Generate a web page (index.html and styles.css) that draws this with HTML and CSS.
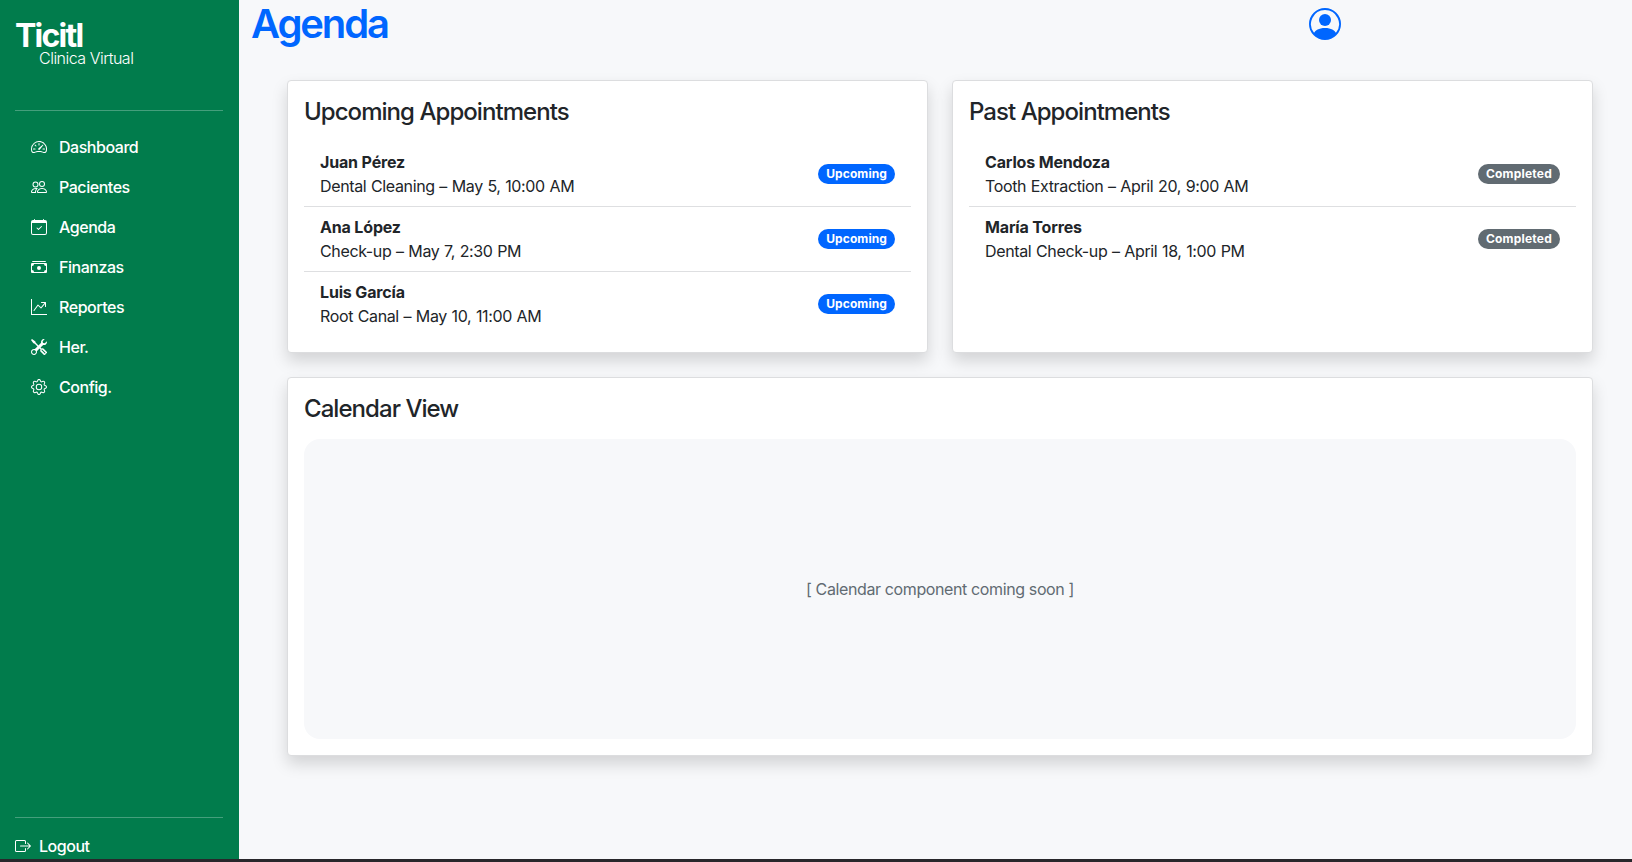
FILE: index.html
```html
<!DOCTYPE html>
<html lang="es">
<head>
<meta charset="utf-8">
<title>Ticitl</title>
<link rel="stylesheet" href="styles.css">
</head>
<body>
<div class="app">
  <aside class="sidebar">
    <div class="brand">
      <div class="brand-name">Ticitl</div>
      <div class="brand-sub">Clinica Virtual</div>
    </div>
    <hr class="rule">
    <nav class="nav">
      <a class="nav-link"><svg class="icon" viewBox="0 0 16 16"><path d="M8 4a.5.5 0 0 1 .5.5V6a.5.5 0 0 1-1 0V4.500A.5.5 0 0 1 8 4M3.732 5.732a.5.5 0 0 1 .707 0l.915.914a.5.5 0 1 1-.708.708l-.914-.915a.5.5 0 0 1 0-.707M2 10a.5.5 0 0 1 .5-.5h1.586a.5.5 0 0 1 0 1H2.500A.5.5 0 0 1 2 10m9.500 0a.5.5 0 0 1 .5-.5h1.500a.5.5 0 0 1 0 1H12a.5.5 0 0 1-.5-.5m.754-4.246a.389.389 0 0 0-.527-.020L7.547 9.310a.910.910 0 1 0 1.302 1.258l3.434-4.297a.389.389 0 0 0-.029-.518z"/><path fill-rule="evenodd" d="M0 10a8 8 0 1 1 15.547 2.661c-.442 1.253-1.845 1.602-2.932 1.250C11.309 13.488 9.475 13 8 13c-1.474 0-3.310.488-4.615.911-1.087.352-2.490.003-2.932-1.250A8 8 0 0 1 0 10m8-7a7 7 0 0 0-6.603 9.329c.203.575.923.876 1.680.630C4.397 12.533 6.358 12 8 12s3.604.532 4.923.960c.757.245 1.477-.056 1.680-.631A7 7 0 0 0 8 3"/></svg><span>Dashboard</span></a>
      <a class="nav-link"><svg class="icon" viewBox="0 0 16 16"><path d="M15 14s1 0 1-1-1-4-5-4-5 3-5 4 1 1 1 1zm-7.978-1L7 12.996c.001-.264.167-1.030.760-1.720C8.312 10.629 9.282 10 11 10c1.717 0 2.687.630 3.240 1.276.593.690.758 1.457.760 1.720l-.008.002-.014.002zM11 7a2 2 0 1 0 0-4 2 2 0 0 0 0 4m3-2a3 3 0 1 1-6 0 3 3 0 0 1 6 0M6.936 9.280a6 6 0 0 0-1.230-.247A7 7 0 0 0 5 9c-4 0-5 3-5 4q0 1 1 1h4.216A2.240 2.240 0 0 1 5 13c0-1.010.377-2.042 1.090-2.904.243-.294.526-.569.846-.816M4.920 10A5.500 5.500 0 0 0 4 13H1c0-.260.164-1.030.760-1.724.545-.636 1.492-1.256 3.160-1.275ZM1.500 5.500a3 3 0 1 1 6 0 3 3 0 0 1-6 0m3-2a2 2 0 1 0 0 4 2 2 0 0 0 0-4"/></svg><span>Pacientes</span></a>
      <a class="nav-link"><svg class="icon" viewBox="0 0 16 16"><path d="M10.854 7.146a.5.5 0 0 1 0 .708l-3 3a.5.5 0 0 1-.708 0l-1.500-1.500a.5.5 0 1 1 .708-.708L7.500 9.793l2.646-2.647a.5.5 0 0 1 .708 0"/><path d="M3.500 0a.5.5 0 0 1 .5.5V1h8V.5a.5.5 0 0 1 1 0V1h1a2 2 0 0 1 2 2v11a2 2 0 0 1-2 2H2a2 2 0 0 1-2-2V3a2 2 0 0 1 2-2h1V.5a.5.5 0 0 1 .5-.5M1 4v10a1 1 0 0 0 1 1h12a1 1 0 0 0 1-1V4z"/></svg><span>Agenda</span></a>
      <a class="nav-link"><svg class="icon" viewBox="0 0 16 16"><path d="M1 3a1 1 0 0 1 1-1h12a1 1 0 0 1 1 1zm7 8a2 2 0 1 0 0-4 2 2 0 0 0 0 4"/><path d="M0 5a1 1 0 0 1 1-1h14a1 1 0 0 1 1 1v8a1 1 0 0 1-1 1H1a1 1 0 0 1-1-1zm3 0a2 2 0 0 1-2 2v4a2 2 0 0 1 2 2h10a2 2 0 0 1 2-2V7a2 2 0 0 1-2-2z"/></svg><span>Finanzas</span></a>
      <a class="nav-link"><svg class="icon" viewBox="0 0 16 16"><path fill-rule="evenodd" d="M0 0h1v15h15v1H0zm10 3.500a.5.5 0 0 1 .5-.5h4a.5.5 0 0 1 .5.5v4a.5.5 0 0 1-1 0V4.900l-3.613 4.417a.5.5 0 0 1-.740.037L7.060 6.767l-3.656 5.027a.5.5 0 0 1-.808-.588l4-5.500a.5.5 0 0 1 .758-.060l2.609 2.610L13.445 4H10.500a.5.5 0 0 1-.5-.5"/></svg><span>Reportes</span></a>
      <a class="nav-link"><svg class="icon" viewBox="0 0 16 16"><path d="M1 0 0 1l2.200 3.081a1 1 0 0 0 .815.419h.070a1 1 0 0 1 .708.293l2.675 2.675-2.617 2.654A3.003 3.003 0 0 0 0 13a3 3 0 1 0 5.878-.851l2.654-2.617.968.968-.305.914a1 1 0 0 0 .242 1.023l3.270 3.270a.997.997 0 0 0 1.414 0l1.586-1.586a.997.997 0 0 0 0-1.414l-3.270-3.270a1 1 0 0 0-1.023-.242L10.500 9.500l-.960-.960 2.680-2.643A3.005 3.005 0 0 0 16 3q0-.405-.102-.777l-2.140 2.141L12 4l-.364-1.757L13.777.102a3 3 0 0 0-3.675 3.680L7.462 6.460 4.793 3.793a1 1 0 0 1-.293-.707v-.071a1 1 0 0 0-.419-.814zm9.646 10.646a.5.5 0 0 1 .708 0l2.914 2.915a.5.5 0 0 1-.707.707l-2.915-2.914a.5.5 0 0 1 0-.708M3 11l.471.242.529.026.287.445.445.287.026.529L5 13l-.242.471-.026.529-.445.287-.287.445-.529.026L3 15l-.471-.242L2 14.732l-.287-.445L1.268 14l-.026-.529L1 13l.242-.471.026-.529.445-.287.287-.445.529-.026z"/></svg><span>Her.</span></a>
      <a class="nav-link"><svg class="icon" viewBox="0 0 16 16"><path d="M8 4.754a3.246 3.246 0 1 0 0 6.492 3.246 3.246 0 0 0 0-6.492M5.754 8a2.246 2.246 0 1 1 4.492 0 2.246 2.246 0 0 1-4.492 0"/><path d="M9.796 1.343c-.527-1.790-3.065-1.790-3.592 0l-.094.319a.873.873 0 0 1-1.255.520l-.292-.160c-1.640-.892-3.433.902-2.540 2.541l.159.292a.873.873 0 0 1-.520 1.255l-.319.094c-1.790.527-1.790 3.065 0 3.592l.319.094a.873.873 0 0 1 .520 1.255l-.160.292c-.892 1.640.901 3.434 2.541 2.540l.292-.159a.873.873 0 0 1 1.255.520l.094.319c.527 1.790 3.065 1.790 3.592 0l.094-.319a.873.873 0 0 1 1.255-.520l.292.160c1.640.893 3.434-.902 2.540-2.541l-.159-.292a.873.873 0 0 1 .520-1.255l.319-.094c1.790-.527 1.790-3.065 0-3.592l-.319-.094a.873.873 0 0 1-.520-1.255l.160-.292c.893-1.640-.902-3.433-2.541-2.540l-.292.159a.873.873 0 0 1-1.255-.520zm-2.633.283c.246-.835 1.428-.835 1.674 0l.094.319a1.873 1.873 0 0 0 2.693 1.115l.291-.160c.764-.415 1.600.420 1.184 1.185l-.159.292a1.873 1.873 0 0 0 1.116 2.692l.318.094c.835.246.835 1.428 0 1.674l-.319.094a1.873 1.873 0 0 0-1.115 2.693l.160.291c.415.764-.420 1.600-1.185 1.184l-.291-.159a1.873 1.873 0 0 0-2.693 1.116l-.094.318c-.246.835-1.428.835-1.674 0l-.094-.319a1.873 1.873 0 0 0-2.692-1.115l-.292.160c-.764.415-1.600-.420-1.184-1.185l.159-.291A1.873 1.873 0 0 0 1.945 8.930l-.319-.094c-.835-.246-.835-1.428 0-1.674l.319-.094A1.873 1.873 0 0 0 3.060 4.377l-.160-.292c-.415-.764.420-1.600 1.185-1.184l.292.159a1.873 1.873 0 0 0 2.692-1.115z"/></svg><span>Config.</span></a>
    </nav>
    <div class="sidebar-foot">
      <hr class="rule">
      <a class="logout"><svg class="icon" viewBox="0 0 16 16"><path fill-rule="evenodd" d="M10 12.500a.5.5 0 0 1-.5.5h-8a.5.5 0 0 1-.5-.5v-9a.5.5 0 0 1 .5-.5h8a.5.5 0 0 1 .5.5v2a.5.5 0 0 0 1 0v-2A1.500 1.500 0 0 0 9.500 2h-8A1.500 1.500 0 0 0 0 3.500v9A1.500 1.500 0 0 0 1.500 14h8a1.500 1.500 0 0 0 1.500-1.500v-2a.5.5 0 0 0-1 0z"/><path fill-rule="evenodd" d="M15.854 8.354a.5.5 0 0 0 0-.708l-3-3a.5.5 0 0 0-.708.708L14.293 7.500H5.500a.5.5 0 0 0 0 1h8.793l-2.147 2.146a.5.5 0 0 0 .708.708z"/></svg><span>Logout</span></a>
    </div>
  </aside>

  <main class="main">
    <header class="topbar">
      <h1 class="page-title">Agenda</h1>
      <svg class="avatar" viewBox="0 0 16 16"><path d="M11 6a3 3 0 1 1-6 0 3 3 0 0 1 6 0"/><path fill-rule="evenodd" d="M0 8a8 8 0 1 1 16 0A8 8 0 0 1 0 8m8-7a7 7 0 0 0-5.468 11.370C3.242 11.226 4.805 10 8 10s4.757 1.225 5.468 2.370A7 7 0 0 0 8 1"/></svg>
    </header>

    <div class="cards">
      <section class="card">
        <h2 class="card-title">Upcoming Appointments</h2>
        <ul class="list">
          <li class="item"><div><strong class="name">Juan Pérez</strong><div class="detail">Dental Cleaning – May 5, 10:00 AM</div></div><span class="badge badge-blue">Upcoming</span></li>
          <li class="item"><div><strong class="name">Ana López</strong><div class="detail">Check-up – May 7, 2:30 PM</div></div><span class="badge badge-blue">Upcoming</span></li>
          <li class="item"><div><strong class="name">Luis García</strong><div class="detail">Root Canal – May 10, 11:00 AM</div></div><span class="badge badge-blue">Upcoming</span></li>
        </ul>
      </section>
      <section class="card">
        <h2 class="card-title">Past Appointments</h2>
        <ul class="list">
          <li class="item"><div><strong class="name">Carlos Mendoza</strong><div class="detail">Tooth Extraction – April 20, 9:00 AM</div></div><span class="badge badge-gray">Completed</span></li>
          <li class="item"><div><strong class="name">María Torres</strong><div class="detail">Dental Check-up – April 18, 1:00 PM</div></div><span class="badge badge-gray">Completed</span></li>
        </ul>
      </section>
      <section class="card card-wide">
        <h2 class="card-title">Calendar View</h2>
        <div class="calendar">[ Calendar component coming soon ]</div>
      </section>
    </div>
  </main>
</div>
</body>
</html>
```
FILE: styles.css
```css
* { box-sizing: border-box; }

body {
  margin: 0;
  height: 862px;
  overflow: hidden;
  background: #f7f8fa;
  color: #212529;
  font: 400 16px/24px Inter, "Liberation Sans", sans-serif;
  letter-spacing: -0.3px;
}

.app {
  display: flex;
  height: 862px;
  border-bottom: 3px solid #28272b;
}

.sidebar {
  display: flex;
  flex-direction: column;
  width: 239px;
  padding: 22px 16px 0 15px;
  background: #017c4c;
  color: #fff;
}

.brand { height: 88px; }

.brand-name {
  font-size: 32px;
  line-height: 28px;
  font-weight: 650;
  letter-spacing: -1.75px;
}

.brand-sub {
  margin-left: 24px;
  line-height: 16px;
  font-weight: 300;
  letter-spacing: -0.5px;
}

.rule {
  width: 100%;
  margin: 0;
  border: 0;
  border-top: 1px solid rgba(255, 255, 255, 0.27);
}

.nav { padding-top: 16px; }

.nav-link {
  display: flex;
  align-items: center;
  gap: 12px;
  height: 40px;
  padding: 0 16px;
  font-weight: 450;
  letter-spacing: -0.46px;
}

.icon {
  width: 16px;
  height: 16px;
  fill: currentColor;
}

.sidebar-foot { margin-top: auto; }

.logout {
  display: flex;
  align-items: center;
  gap: 8px;
  height: 24px;
  margin: 16px 0 1px;
  font-weight: 450;
  letter-spacing: -0.46px;
}

.main { flex: 1; }

.topbar {
  display: flex;
  align-items: flex-start;
  justify-content: space-between;
  height: 80px;
  padding: 0 291.5px 0 12px;
}

.page-title {
  margin: 0;
  color: #0066ff;
  font-size: 40px;
  line-height: 48px;
  font-weight: 570;
  letter-spacing: -2.1px;
}

.avatar {
  width: 32px;
  height: 32px;
  margin-top: 8px;
  fill: #0066ff;
}

.cards {
  display: grid;
  grid-template-columns: 1fr 1fr;
  gap: 24px;
  padding: 0 39px 0 48px;
}

.card {
  padding: 16px;
  border: 1px solid #dcdddf;
  border-radius: 4px;
  background: #fff;
  box-shadow: 0 8px 16px rgba(0, 0, 0, 0.15);
}

.card-wide { grid-column: span 2; }

.card-title {
  margin: 0 0 14.8px;
  padding-top: 1.2px;
  font-size: 24px;
  line-height: 28.8px;
  font-weight: 500;
  letter-spacing: -0.95px;
}

.list {
  margin: 0;
  padding: 0;
  list-style: none;
}

.item {
  display: flex;
  align-items: center;
  justify-content: space-between;
  padding: 8px 16px;
  border-bottom: 1px solid #dedfe1;
}

.item:last-child { border-bottom: 0; }

.name {
  font-weight: 700;
  letter-spacing: -0.16px;
}

.detail {
  letter-spacing: -0.36px;
  word-spacing: 0.5px;
}

.badge {
  padding: 4px 8px;
  border-radius: 10px;
  color: #fff;
  font-size: 12px;
  line-height: 12px;
  font-weight: 700;
}

.badge-blue {
  background: #0066ff;
  letter-spacing: 0.1px;
}

.badge-gray {
  background: #616b72;
  letter-spacing: 0.22px;
}

.calendar {
  display: flex;
  align-items: center;
  justify-content: center;
  height: 300px;
  border-radius: 16px;
  background: #f7f8fa;
  color: #616b72;
  letter-spacing: -0.38px;
}
```
